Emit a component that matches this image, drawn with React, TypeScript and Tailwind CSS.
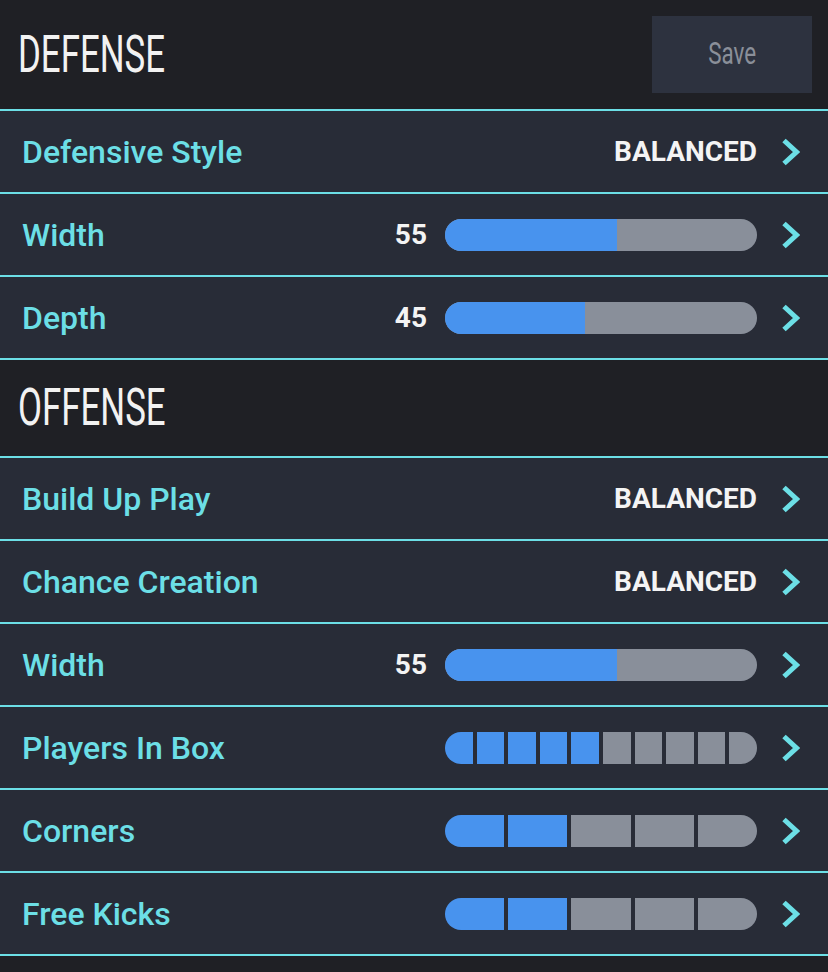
import React from "react";

const Chevron = () => (
  <svg width="19" height="28" viewBox="0 0 19 28" className="shrink-0">
    <polyline points="3,2.5 15.5,14 3,25.5" fill="none" stroke="#6cdfe6" strokeWidth="5" strokeLinecap="butt" strokeLinejoin="miter" />
  </svg>
);

const Header = ({ title, save }: { title: string; save?: boolean }) => (
  <div className={`flex items-center justify-between bg-[#1f2025] border-b-2 border-[#6cdfe6] pl-[18px] pr-4 ${save ? "h-[111px]" : "h-[98px]"}`}>
    <span
      className="inline-block origin-left scale-x-[0.67] text-[52px] leading-none text-[#f2f2f2] font-normal"
      style={{ fontFamily: "Roboto, sans-serif" }}
    >
      {title}
    </span>
    {save && (
      <div className="w-[160px] h-[77px] bg-[#2d323f] flex items-center justify-center">
        <span className="inline-block scale-x-[0.7] text-[32px] leading-none text-[#8a8f99] -mt-[3px]">Save</span>
      </div>
    )}
  </div>
);

const Row = ({ label, children }: { label: string; children: React.ReactNode }) => (
  <div className="h-[83px] flex items-center justify-between bg-[#282c37] border-b-2 border-[#6cdfe6] pl-[22px] pr-[28px]">
    <span className="text-[32px] font-medium text-[#6cdfe6] leading-none">{label}</span>
    <div className="flex items-center gap-[24px]">
      {children}
      <Chevron />
    </div>
  </div>
);

const Value = ({ text }: { text: string }) => (
  <span className="text-[28px] font-bold text-[#f4f4f4] leading-none">{text}</span>
);

const Slider = ({ value }: { value: number }) => (
  <div className="flex items-center gap-[18px]">
    <span className="text-[28px] font-bold text-[#f4f4f4] leading-none">{value}</span>
    <div className="w-[312px] h-[32px] rounded-full bg-[#898f9a] overflow-hidden">
      <div className="h-full bg-[#4893ee]" style={{ width: `${value}%` }} />
    </div>
  </div>
);

const Segments = ({ total, filled }: { total: number; filled: number }) => (
  <div className="w-[312px] h-[32px] rounded-full overflow-hidden flex gap-1">
    {Array.from({ length: total }).map((_, i) => (
      <div key={i} className={`flex-1 h-full ${i < filled ? "bg-[#4893ee]" : "bg-[#898f9a]"}`} />
    ))}
  </div>
);

export default function App() {
  return (
    <div className="w-[828px] h-[972px] bg-[#1f2025] overflow-hidden" style={{ fontFamily: "Roboto, sans-serif" }}>
      <Header title="DEFENSE" save />
      <Row label="Defensive Style"><Value text="BALANCED" /></Row>
      <Row label="Width"><Slider value={55} /></Row>
      <Row label="Depth"><Slider value={45} /></Row>
      <Header title="OFFENSE" />
      <Row label="Build Up Play"><Value text="BALANCED" /></Row>
      <Row label="Chance Creation"><Value text="BALANCED" /></Row>
      <Row label="Width"><Slider value={55} /></Row>
      <Row label="Players In Box"><Segments total={10} filled={5} /></Row>
      <Row label="Corners"><Segments total={5} filled={2} /></Row>
      <Row label="Free Kicks"><Segments total={5} filled={2} /></Row>
    </div>
  );
}
